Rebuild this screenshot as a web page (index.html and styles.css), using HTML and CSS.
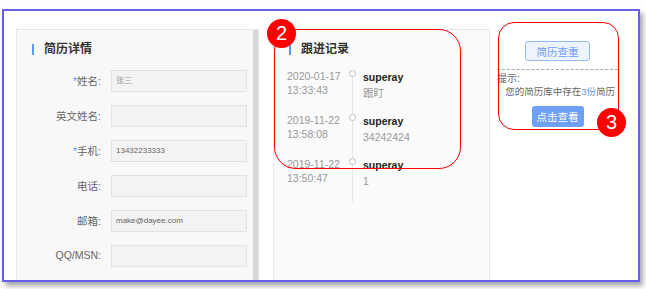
FILE: index.html
```html
<!DOCTYPE html>
<html lang="zh-CN">
<head>
    <meta charset="UTF-8">
    <title>简历详情</title>
    <link rel="stylesheet" href="styles.css">
</head>
<body>
    <div class="frame">
        <div class="panel resume">
            <div class="resume-body">
                <h2 class="title">简历详情</h2>
                <div class="row">
                    <label><span class="req">*</span>姓名:</label>
                    <div class="field light">张三</div>
                </div>
                <div class="row">
                    <label>英文姓名:</label>
                    <div class="field"></div>
                </div>
                <div class="row">
                    <label><span class="req">*</span>手机:</label>
                    <div class="field">13432233333</div>
                </div>
                <div class="row">
                    <label>电话:</label>
                    <div class="field"></div>
                </div>
                <div class="row">
                    <label>邮箱:</label>
                    <div class="field">make@dayee.com</div>
                </div>
                <div class="row">
                    <label>QQ/MSN:</label>
                    <div class="field"></div>
                </div>
            </div>
            <div class="scrollbar"></div>
        </div>

        <div class="panel follow">
            <h2 class="title">跟进记录</h2>
            <ul class="timeline">
                <li>
                    <div class="date">2020-01-17<br>13:33:43</div>
                    <div class="axis"><span class="dot"></span><span class="line"></span></div>
                    <div class="note"><b>superay</b><span>跟盯</span></div>
                </li>
                <li>
                    <div class="date">2019-11-22<br>13:58:08</div>
                    <div class="axis"><span class="dot"></span><span class="line"></span></div>
                    <div class="note"><b>superay</b><span>34242424</span></div>
                </li>
                <li class="last">
                    <div class="date">2019-11-22<br>13:50:47</div>
                    <div class="axis"><span class="dot"></span><span class="line"></span></div>
                    <div class="note"><b>superay</b><span>1</span></div>
                </li>
            </ul>
        </div>

        <div class="side">
            <div class="side-box">
                <button class="btn-check">简历查重</button>
                <div class="tip">
                    <p class="tip-label">提示:</p>
                    <p class="tip-text">您的简历库中存在<span class="num">3份</span>简历</p>
                </div>
                <button class="btn-view">点击查看</button>
            </div>
        </div>
    </div>

    <!-- marcas de anotacion -->
    <div class="mark mark-2"></div>
    <div class="badge badge-2">2</div>
    <div class="mark mark-3"></div>
    <div class="badge badge-3">3</div>
</body>
</html>
```

FILE: styles.css
```css
body {
    margin: 0;
    position: relative;
    height: 289px;
    background: #fff;
    font-family: "Liberation Sans", "Noto Sans CJK SC", sans-serif;
    color: #666;
    overflow: hidden;
}
.frame {
    margin: 9px 0 0 2px;
    border: 2px solid #6b5ee8;
    box-shadow: 3px 4px 5px rgba(0, 0, 0, 0.35);
    padding: 18px 0 0 12px;
    box-sizing: border-box;
    width: 638px;
    height: 273px;
    display: flex;
    align-items: flex-start;
    overflow: hidden;
    background: #fff;
}
.panel {
    height: 300px;
    background: #f8f8f8;
    border: 1px solid #e6e6e6;
    box-sizing: border-box;
}
.title {
    margin: 0;
    font-size: 12px;
    font-weight: bold;
    color: #333;
    line-height: 16px;
    display: flex;
    align-items: center;
}
.title::before {
    content: "";
    width: 2px;
    height: 11px;
    background: #5b97f3;
    margin-right: 10px;
}

/* columna izquierda */
.resume {
    width: 243px;
    display: flex;
}
.resume-body {
    flex: 1;
    padding: 11px 0 0 15px;
}
.resume .title {
    margin-bottom: 13px;
}
.scrollbar {
    width: 5px;
    background: #d8d8d8;
}
.row {
    display: flex;
    align-items: center;
    margin-bottom: 13px;
    margin-left: -15px;
}
.row label {
    width: 84px;
    text-align: right;
    font-size: 10.5px;
    color: #666;
    margin-right: 10px;
    position: relative;
    top: -1px;
}
.req {
    color: #5b97f3;
}
.field {
    width: 136px;
    height: 22px;
    box-sizing: border-box;
    background: #f3f3f3;
    border: 1px solid #e2e2e2;
    font-size: 8px;
    line-height: 20px;
    padding-left: 4px;
    color: #666;
}
.field.light {
    color: #999;
}

/* columna central */
.follow {
    margin-left: 14px;
    width: 217px;
    background: #fafafa;
    border-color: #ececec;
    border-top-color: #e6e6e6;
    padding: 11px 0 0 15px;
}
.follow .title {
    margin-bottom: 13px;
}
.timeline {
    list-style: none;
    margin: 0 0 0 -2px;
    padding: 0;
}
.timeline li {
    display: flex;
    height: 44px;
}
.date {
    width: 60px;
    font-size: 10.5px;
    line-height: 13.5px;
    color: #999;
}
.axis {
    width: 10px;
    display: flex;
    flex-direction: column;
    align-items: center;
}
.dot {
    width: 7px;
    height: 7px;
    box-sizing: border-box;
    border: 1.5px solid #bdbdbd;
    border-radius: 50%;
    background: #fff;
}
.line {
    flex: 1;
    width: 1px;
    background: #e6e6e6;
}
.note {
    margin-left: 6px;
    display: flex;
    flex-direction: column;
}
.note b {
    font-size: 10.5px;
    color: #222;
    line-height: 15px;
}
.note span {
    font-size: 10.5px;
    color: #999;
    line-height: 16px;
}

/* columna derecha */
.side {
    flex: 1;
    height: 300px;
    padding: 12px 0 0 7px;
}
.side-box {
    width: 121px;
    display: flex;
    flex-direction: column;
    align-items: center;
}
.btn-check {
    width: 65px;
    height: 20px;
    padding: 0;
    background: #edf3ff;
    border: 1px solid #95bbf7;
    border-radius: 3px;
    color: #6d9cf0;
    font-family: inherit;
    font-size: 10.5px;
}
.tip {
    align-self: stretch;
    margin-top: 8px;
    border-top: 1px dashed #a8a8a8;
    font-size: 10px;
    line-height: 13px;
}
.tip p {
    margin: 0;
}
.tip-label {
    padding-top: 2px;
}
.tip-text {
    font-size: 9.5px;
    text-align: right;
    padding-right: 3px;
}
.num {
    color: #5b97f3;
}
.btn-view {
    margin-top: 8px;
    width: 52px;
    height: 21px;
    padding: 0;
    border: none;
    border-radius: 3px;
    background: #6ea0f6;
    color: #fff;
    font-family: inherit;
    font-size: 10.5px;
}

/* anotaciones */
.mark {
    position: absolute;
    border: 1px solid #f00;
    box-sizing: border-box;
}
.mark-2 {
    left: 274px;
    top: 29px;
    width: 187px;
    height: 140px;
    border-radius: 22px;
}
.mark-3 {
    left: 498px;
    top: 22px;
    width: 121px;
    height: 108px;
    border-radius: 16px;
}
.badge {
    position: absolute;
    width: 29px;
    height: 29px;
    border-radius: 50%;
    background: #f00;
    color: #fff;
    font-size: 20px;
    line-height: 29px;
    text-align: center;
}
.badge-2 {
    left: 267px;
    top: 19px;
}
.badge-3 {
    left: 597px;
    top: 108px;
}
```
